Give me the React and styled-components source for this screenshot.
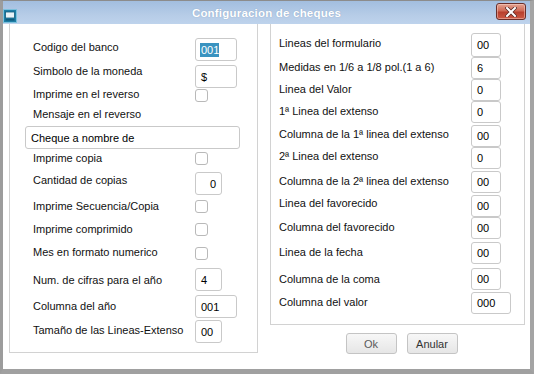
import React from 'react';
import styled, { createGlobalStyle } from 'styled-components';

const Global = createGlobalStyle`
  html, body {
    margin: 0;
    padding: 0;
    background: #ffffff;
  }
  body {
    font-family: 'Liberation Sans', Arial, sans-serif;
  }
`;

const Window = styled.div`
  width: 534px;
  height: 374px;
  box-sizing: border-box;
  display: flex;
  flex-direction: column;
  border-left: 3px solid #9c9c9c;
  border-right: 4px solid #a4a4a4;
  border-bottom: 5px solid #a0a0a0;
  border-top: 1px solid #8c8c8c;
  background: #ffffff;
`;

const TitleBar = styled.div`
  height: 23px;
  flex-shrink: 0;
  display: grid;
  grid-template-columns: 1fr auto 1fr;
  align-items: center;
  padding-right: 4px;
  background: linear-gradient(#a2bedf, #b6cce7 60%, #bed3ec);
`;

const AppIcon = styled.svg`
  justify-self: start;
  align-self: end;
  margin-bottom: 1px;
`;

const Title = styled.div`
  color: #ffffff;
  font-size: 11.5px;
  font-weight: bold;
  letter-spacing: 0.2px;
  text-shadow: 0 0 1px rgba(80, 110, 150, 0.5);
  padding-left: 4px;
`;

const CloseButton = styled.div`
  justify-self: end;
  align-self: start;
  margin-top: 2px;
  width: 28px;
  height: 15px;
  border: 1px solid #6a2f2a;
  border-radius: 3px;
  background: linear-gradient(#e3a493, #cf6a56 45%, #b8402e 55%, #cc5a45);
  display: flex;
  align-items: center;
  justify-content: center;
  box-shadow: inset 0 0 0 1px rgba(255, 220, 210, 0.45);
`;

const Body = styled.div`
  flex: 1;
  display: flex;
  align-items: flex-start;
  gap: 12px;
  padding-left: 6px;
`;

const Panel = styled.div`
  box-sizing: border-box;
  width: ${p => p.$w}px;
  border: 1px solid #d2d2d2;
  border-top: none;
  background: #ffffff;
  padding: ${p => p.$pt}px 0 ${p => p.$pb}px ${p => p.$pl}px;
`;

const Column = styled.div`
  display: flex;
  flex-direction: column;
  align-items: center;
`;

const Row = styled.div`
  display: grid;
  grid-template-columns: ${p => p.$col}px auto;
  align-items: start;
  height: ${p => p.$h}px;
`;

const Label = styled.div`
  margin-top: ${p => p.$ly}px;
  font-size: 11px;
  line-height: 13px;
  color: #111111;
  white-space: nowrap;
`;

const Field = styled.div`
  margin-top: ${p => p.$cy}px;
  box-sizing: border-box;
  width: ${p => p.$w}px;
  height: ${p => p.$h}px;
  border: 1px solid #c9c9c9;
  border-radius: 3px;
  background: #ffffff;
  display: flex;
  align-items: center;
  justify-content: ${p => (p.$right ? 'flex-end' : 'flex-start')};
  padding: 0 5px;
  font-size: 11px;
  color: #000000;
`;

const Selected = styled.span`
  background: #3a93c0;
  color: #ffffff;
  margin-left: -1px;
  padding: 1px 0 1px 1px;
  line-height: 12px;
`;

const Check = styled.div`
  margin-top: ${p => p.$cy}px;
  box-sizing: border-box;
  width: 13px;
  height: 13px;
  border: 1px solid #b9b9b9;
  border-radius: 3px;
  background: #ffffff;
`;

const TextBoxRow = styled.div`
  height: ${p => p.$h}px;
  margin-left: -8px;
  padding-top: 2px;
  box-sizing: border-box;
`;

const TextBox = styled.div`
  box-sizing: border-box;
  width: 215px;
  height: 23px;
  border: 1px solid #c9c9c9;
  border-radius: 3px;
  display: flex;
  align-items: center;
  padding-left: 5px;
  font-size: 11px;
  color: #000000;
`;

const ButtonRow = styled.div`
  display: flex;
  gap: 10px;
  margin-top: 8px;
  padding-left: 8px;
`;

const Button = styled.div`
  box-sizing: border-box;
  width: 51px;
  height: 21px;
  border: 1px solid #c4c4c4;
  border-radius: 3px;
  background: linear-gradient(#f7f7f7, #e6e6e6);
  display: flex;
  align-items: center;
  justify-content: center;
  font-size: 11px;
  color: ${p => (p.$dim ? '#5a5a5a' : '#333333')};
`;

const leftRows = [
  { label: 'Codigo del banco', h: 28, ly: 7, cy: 4, kind: 'field', w: 42, value: '001', sel: true },
  { label: 'Simbolo de la moneda', h: 26, ly: 3, cy: 3, kind: 'field', w: 42, value: '$' },
  { label: 'Imprime en el reverso', h: 16, ly: 0, cy: 1, kind: 'check' },
  { label: 'Mensaje en el reverso', h: 20, ly: 4, kind: 'none' },
  { kind: 'text', h: 26, value: 'Cheque a nombre de' },
  { label: 'Imprime copia', h: 16, ly: 2, cy: 2, kind: 'check' },
  { label: 'Cantidad de copias', h: 30, ly: 8, cy: 6, kind: 'field', w: 27, value: '0', right: true },
  { label: 'Imprime Secuencia/Copia', h: 20, ly: 4, cy: 4, kind: 'check' },
  { label: 'Imprime comprimido', h: 24, ly: 7, cy: 7, kind: 'check' },
  { label: 'Mes en formato numerico', h: 24, ly: 6, cy: 7, kind: 'check' },
  { label: 'Num. de cifras para el año', h: 28, ly: 10, cy: 4, kind: 'field', w: 27, value: '4' },
  { label: 'Columna del año', h: 26, ly: 8, cy: 3, kind: 'field', w: 42, value: '001' },
  { label: 'Tamaño de las Lineas-Extenso', h: 26, ly: 6, cy: 2, kind: 'field', w: 27, value: '00' },
];

const rightRows = [
  { label: 'Lineas del formulario', h: 27, ly: 7, cy: 3, fh: 24, value: '00' },
  { label: 'Medidas en 1/6 a 1/8 pol.(1 a 6)', h: 22, ly: 4, cy: 0, value: '6' },
  { label: 'Linea del Valor', h: 22, ly: 4, cy: 0, value: '0' },
  { label: '1ª Linea del extenso', h: 23, ly: 4, cy: 0, value: '0' },
  { label: 'Columna de la 1ª linea del extenso', h: 23, ly: 4, cy: 1, value: '00' },
  { label: '2ª Linea del extenso', h: 23, ly: 3, cy: 0, value: '0' },
  { label: 'Columna de la 2ª linea del extenso', h: 24, ly: 5, cy: 1, value: '00' },
  { label: 'Linea del favorecido', h: 23, ly: 3, cy: 1, value: '00' },
  { label: 'Columna del favorecido', h: 23, ly: 4, cy: 0, value: '00' },
  { label: 'Linea de la fecha', h: 26, ly: 6, cy: 2, value: '00' },
  { label: 'Columna de la coma', h: 25, ly: 7, cy: 2, value: '00' },
  { label: 'Columna del valor', h: 25, ly: 5, cy: 1, w: 40, value: '000' },
];

const LeftRow = ({ row }) => {
  if (row.kind === 'text') {
    return (
      <TextBoxRow $h={row.h}>
        <TextBox>{row.value}</TextBox>
      </TextBoxRow>
    );
  }
  return (
    <Row $col={162} $h={row.h}>
      <Label $ly={row.ly}>{row.label}</Label>
      {row.kind === 'field' && (
        <Field $cy={row.cy} $w={row.w} $h={23} $right={row.right}>
          {row.sel ? <Selected>{row.value}</Selected> : row.value}
        </Field>
      )}
      {row.kind === 'check' && <Check $cy={row.cy} />}
    </Row>
  );
};

const App = () => {
  return (
    <>
      <Global />
      <Window>
        <TitleBar>
          <AppIcon width="14" height="14" viewBox="0 0 14 14">
            <rect x="0.5" y="0.5" width="13" height="13" fill="#1e7ea6" stroke="#7cc0dc" />
            <rect x="2.5" y="3" width="9" height="6" fill="#e8f2f7" stroke="#0f5b7c" strokeWidth="0.8" />
            <rect x="2.5" y="10" width="9" height="1.6" fill="#0f5b7c" />
          </AppIcon>
          <Title>Configuracion de cheques</Title>
          <CloseButton>
            <svg width="12" height="10" viewBox="0 0 12 10">
              <path d="M2 1 L10 9 M10 1 L2 9" stroke="#5a2a26" strokeWidth="3.6" strokeLinecap="square" />
              <path d="M2 1 L10 9 M10 1 L2 9" stroke="#ffffff" strokeWidth="2" strokeLinecap="square" />
            </svg>
          </CloseButton>
        </TitleBar>
        <Body>
          <Panel $w={249} $pt={10} $pb={8} $pl={23}>
            {leftRows.map((row, i) => (
              <LeftRow key={i} row={row} />
            ))}
          </Panel>
          <Column>
            <Panel $w={255} $pt={6} $pb={8} $pl={8}>
              {rightRows.map((row, i) => (
                <Row key={i} $col={192} $h={row.h}>
                  <Label $ly={row.ly}>{row.label}</Label>
                  <Field $cy={row.cy} $w={row.w || 30} $h={row.fh || 22}>
                    {row.value}
                  </Field>
                </Row>
              ))}
            </Panel>
            <ButtonRow>
              <Button $dim>Ok</Button>
              <Button>Anular</Button>
            </ButtonRow>
          </Column>
        </Body>
      </Window>
    </>
  );
};

export default App;
